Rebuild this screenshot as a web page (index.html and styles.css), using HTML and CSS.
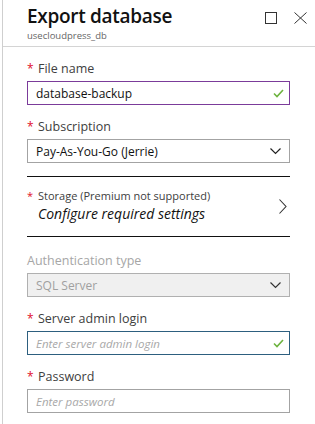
FILE: index.html
```html
<!DOCTYPE html>
<html>
<head>
<meta charset="utf-8">
<link rel="stylesheet" href="styles.css">
</head>
<body>
<div class="blade">
  <header class="blade-header">
    <div class="titles">
      <h1 class="title">Export database</h1>
      <div class="subtitle">usecloudpress_db</div>
    </div>
    <div class="actions">
      <svg class="icon" width="12" height="12" viewBox="0 0 12 12"><rect x="0.5" y="0.5" width="11" height="11" fill="none" stroke="#333" stroke-width="1"/></svg>
      <svg class="icon" width="13" height="12" viewBox="0 0 13 12"><path d="M0.5 0.5 L12.5 11.5 M12.5 0.5 L0.5 11.5" stroke="#333" stroke-width="1" fill="none"/></svg>
    </div>
  </header>
  <form class="form">
    <div class="group g1">
      <label class="label"><span class="req">*</span>File name</label>
      <div class="input input-active">
        <span class="value">database-backup</span>
        <svg class="check" width="11" height="9" viewBox="0 0 11 9"><path d="M1 4.5 L4 7.5 L10 1" stroke="#6db33f" stroke-width="1.6" fill="none"/></svg>
      </div>
    </div>
    <div class="group g2">
      <label class="label"><span class="req">*</span>Subscription</label>
      <div class="input">
        <span class="value">Pay-As-You-Go (Jerrie)</span>
        <svg class="chev" width="11" height="7" viewBox="0 0 11 7"><path d="M0.5 0.5 L5.5 5.5 L10.5 0.5" stroke="#222" stroke-width="1.2" fill="none"/></svg>
      </div>
    </div>
    <div class="storage">
      <div class="storage-text">
        <div class="storage-label"><span class="req">*</span>Storage (Premium not supported)</div>
        <div class="storage-value">Configure required settings</div>
      </div>
      <svg class="chev-right" width="8" height="15" viewBox="0 0 8 15"><path d="M0.5 0.5 L7 7.5 L0.5 14.5" stroke="#333" stroke-width="1.1" fill="none"/></svg>
    </div>
    <div class="group g3">
      <label class="label label-disabled">Authentication type</label>
      <div class="input input-disabled">
        <span class="value">SQL Server</span>
        <svg class="chev" width="11" height="7" viewBox="0 0 11 7"><path d="M0.5 0.5 L5.5 5.5 L10.5 0.5" stroke="#333" stroke-width="1.2" fill="none"/></svg>
      </div>
    </div>
    <div class="group g4">
      <label class="label"><span class="req">*</span>Server admin login</label>
      <div class="input input-focus">
        <span class="placeholder">Enter server admin login</span>
        <svg class="check" width="11" height="9" viewBox="0 0 11 9"><path d="M1 4.5 L4 7.5 L10 1" stroke="#6db33f" stroke-width="1.6" fill="none"/></svg>
      </div>
    </div>
    <div class="group g5">
      <label class="label"><span class="req">*</span>Password</label>
      <div class="input">
        <span class="placeholder">Enter password</span>
      </div>
    </div>
  </form>
</div>
</body>
</html>
```
FILE: styles.css
```css
* { box-sizing: border-box; }
html, body { margin: 0; padding: 0; background: #fff; }
body {
  font-family: "Open Sans", "Noto Sans", sans-serif;
  color: #222;
  width: 315px;
  height: 424px;
  overflow: hidden;
}
.blade {
  margin-left: 2px;
  border-left: 1px solid #cfcfcf;
  height: 424px;
}
.blade-header {
  height: 47px;
  border-bottom: 1px solid #d4d4d4;
  display: flex;
  justify-content: space-between;
  align-items: flex-start;
  padding: 0 8px 0 24px;
}
.title {
  margin: 0;
  padding-top: 3px;
  font-size: 19px;
  line-height: 26px;
  font-weight: 600;
  color: #111;
  letter-spacing: -0.3px;
}
.subtitle {
  font-size: 9.5px;
  line-height: 12px;
  color: #666;
  margin-top: 1px;
}
.actions {
  display: flex;
  gap: 17px;
  padding-top: 12px;
  padding-right: 0;
}
.icon { display: block; }
.form {
  padding: 12px 25px 0 24px;
}
.label {
  display: block;
  font-size: 12.5px;
  line-height: 20px;
  height: 20px;
  color: #404040;
  margin-bottom: 2px;
}
.req {
  color: #e0102a;
  display: inline-block;
  width: 11px;
  font-size: 12px;
}
.label-disabled { color: #a6a6a6; }
.input {
  height: 24px;
  border: 1px solid #a3a3a3;
  display: flex;
  align-items: center;
  justify-content: space-between;
  padding: 0 8px 0 8px;
  font-size: 12px;
  color: #111;
}
.input-active { border-color: #7b3b9a; }
.input-focus { border-color: #2d5f7f; }
.input-disabled { background: #f0f0f0; color: #a0a0a0; border-color: #b0b0b0; }
.value { white-space: nowrap; }
.placeholder { font-style: italic; color: #a8a8a8; font-size: 11.5px; }
.check { margin-right: -3px; }
.chev { margin-right: 0; }
.g2 { margin-top: 12px; }
.storage {
  margin-top: 13px;
  border-top: 1px solid #111;
  border-bottom: 1px solid #111;
  height: 61px;
  display: flex;
  align-items: center;
  justify-content: space-between;
  padding: 0 3px 1px 0;
}
.storage-label {
  font-size: 11px;
  line-height: 16px;
  color: #404040;
}
.storage-label .req { font-size: 11px; }
.storage-value {
  font-size: 14px;
  font-style: italic;
  line-height: 20px;
  color: #111;
  padding-left: 11px;
}
.g3 { margin-top: 14px; }
.g4 { margin-top: 12px; }
.g5 { margin-top: 12px; }
```
